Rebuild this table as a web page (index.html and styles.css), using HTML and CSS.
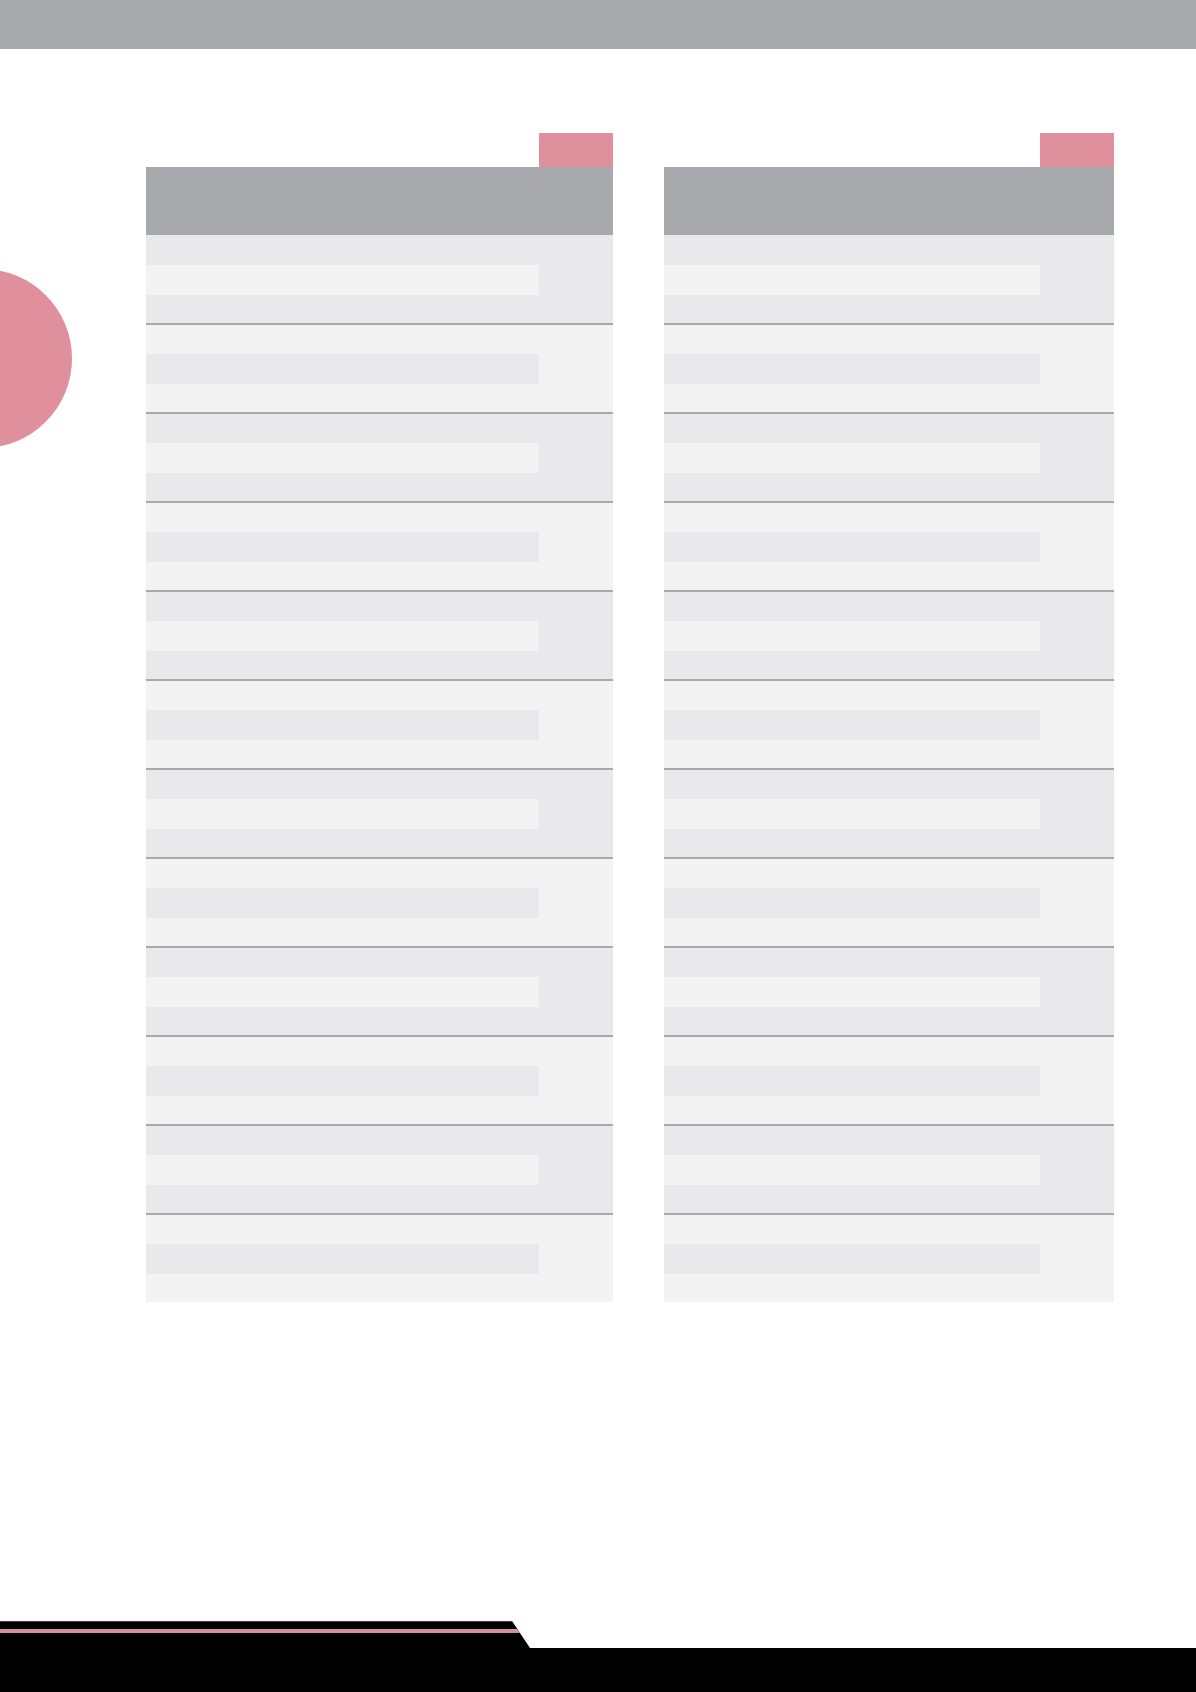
FILE: index.html
```html
<!DOCTYPE html>
<html lang="en">
<head>
<meta charset="utf-8">
<title>Tables</title>
<link rel="stylesheet" href="styles.css">
</head>
<body>
<div class="page">
  <div class="topbar"></div>
  <div class="circle"></div>
  <div class="tables">
    <div class="table table-left">
      <div class="tab"></div>
      <div class="header"></div>
      <div class="row dark"><div class="stripe"></div></div>
      <div class="row light"><div class="stripe"></div></div>
      <div class="row dark"><div class="stripe"></div></div>
      <div class="row light"><div class="stripe"></div></div>
      <div class="row dark"><div class="stripe"></div></div>
      <div class="row light"><div class="stripe"></div></div>
      <div class="row dark"><div class="stripe"></div></div>
      <div class="row light"><div class="stripe"></div></div>
      <div class="row dark"><div class="stripe"></div></div>
      <div class="row light"><div class="stripe"></div></div>
      <div class="row dark"><div class="stripe"></div></div>
      <div class="row light"><div class="stripe"></div></div>
    </div>
    <div class="table table-right">
      <div class="tab"></div>
      <div class="header"></div>
      <div class="row dark"><div class="stripe"></div></div>
      <div class="row light"><div class="stripe"></div></div>
      <div class="row dark"><div class="stripe"></div></div>
      <div class="row light"><div class="stripe"></div></div>
      <div class="row dark"><div class="stripe"></div></div>
      <div class="row light"><div class="stripe"></div></div>
      <div class="row dark"><div class="stripe"></div></div>
      <div class="row light"><div class="stripe"></div></div>
      <div class="row dark"><div class="stripe"></div></div>
      <div class="row light"><div class="stripe"></div></div>
      <div class="row dark"><div class="stripe"></div></div>
      <div class="row light"><div class="stripe"></div></div>
    </div>
  </div>
  <div class="footer">
    <svg class="footer-art" width="1196" height="71" viewBox="0 0 1196 71" xmlns="http://www.w3.org/2000/svg">
      <polygon points="0,0 512,0 530,27 1196,27 1196,71 0,71" fill="#000000"/>
      <line x1="0" y1="0.5" x2="512" y2="0.5" stroke="#3a3a3c" stroke-width="1"/>
      <polygon points="0,8 517,8 520,12 0,12" fill="#d3919c"/>
    </svg>
  </div>
</div>
</body>
</html>
```

FILE: styles.css
```css
* {
  box-sizing: border-box;
}

html, body {
  margin: 0;
  padding: 0;
  background: #ffffff;
  font-family: "Liberation Sans", Arial, sans-serif;
}

.page {
  position: relative;
  width: 1196px;
  height: 1692px;
  display: flex;
  flex-direction: column;
  overflow: hidden;
}

.topbar {
  height: 49px;
  background: #a8a9ad;
  flex: none;
}

.circle {
  position: absolute;
  left: -107px;
  top: 269px;
  width: 179px;
  height: 179px;
  border-radius: 50%;
  background: #e08f9d;
}

.tables {
  display: flex;
  gap: 51px;
  padding-top: 84px;
  padding-left: 146px;
}

.table {
  display: flex;
  flex-direction: column;
}

.table-left {
  width: 467px;
}

.table-right {
  width: 450px;
}

.tab {
  align-self: flex-end;
  width: 74px;
  height: 34px;
  background: #e08f9d;
}

.header {
  height: 68px;
  background: #a8a9ad;
}

.row {
  height: 89px;
  padding-top: 29px;
  border-top: 2px solid #a9a9ac;
}

.header + .row {
  height: 88px;
  padding-top: 30px;
  border-top: none;
}

.row.dark {
  background: #e9e9eb;
}

.row.light {
  background: #f3f3f4;
}

.stripe {
  height: 30px;
  margin-right: 74px;
}

.row.dark .stripe {
  background: #f3f3f4;
}

.row.light .stripe {
  background: #e9e9eb;
}

.footer {
  margin-top: auto;
  height: 71px;
  flex: none;
}

.footer-art {
  display: block;
}
```
